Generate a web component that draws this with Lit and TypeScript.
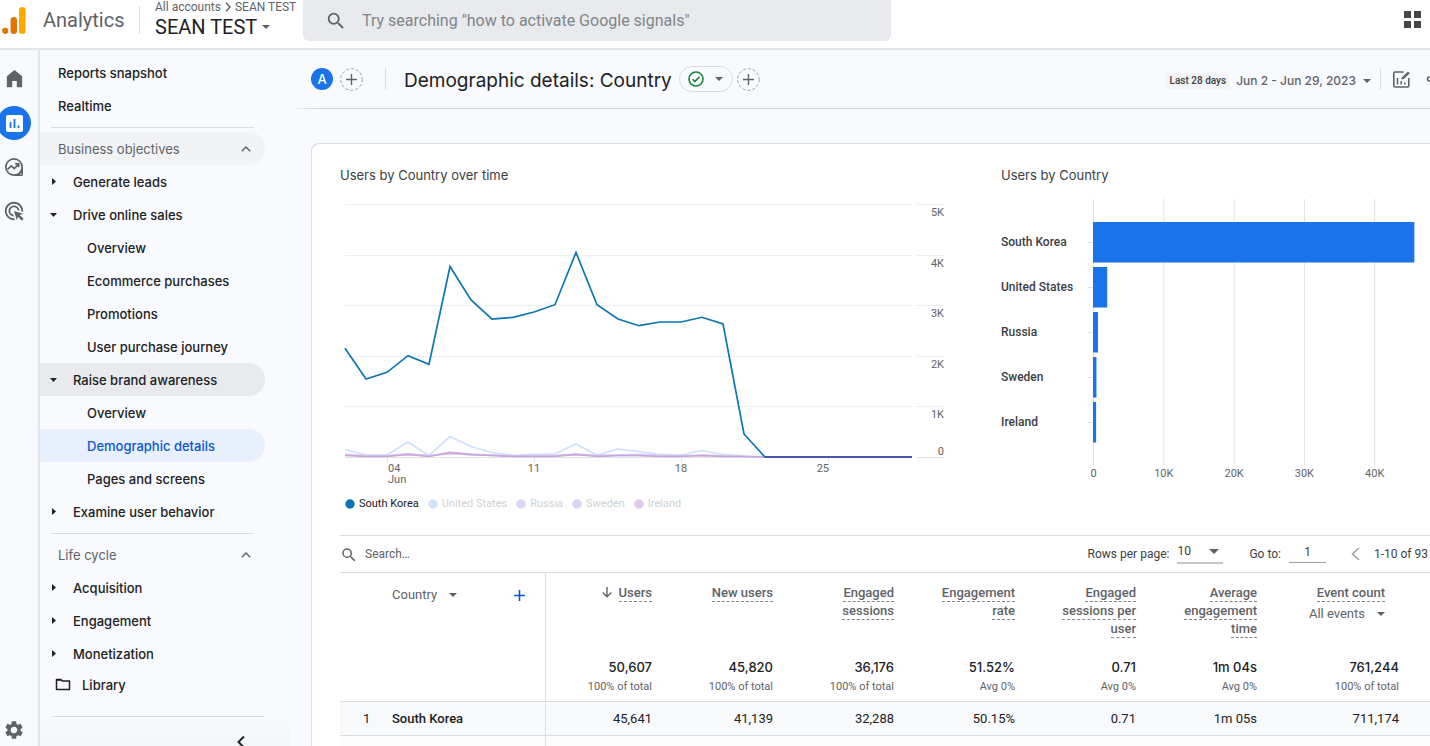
import { LitElement, html, svg, css } from "lit";
import { customElement } from "lit/decorators.js";
import { classMap } from "lit/directives/class-map.js";

type NavKind = "top" | "group" | "closed" | "open" | "leaf" | "rule" | "library";
interface NavItem {
  kind: NavKind;
  label?: string;
  tone?: "hover" | "parent" | "active";
}

const NAV: NavItem[] = [
  { kind: "top", label: "Reports snapshot" },
  { kind: "top", label: "Realtime" },
  { kind: "rule" },
  { kind: "group", label: "Business objectives", tone: "hover" },
  { kind: "closed", label: "Generate leads" },
  { kind: "open", label: "Drive online sales" },
  { kind: "leaf", label: "Overview" },
  { kind: "leaf", label: "Ecommerce purchases" },
  { kind: "leaf", label: "Promotions" },
  { kind: "leaf", label: "User purchase journey" },
  { kind: "open", label: "Raise brand awareness", tone: "parent" },
  { kind: "leaf", label: "Overview" },
  { kind: "leaf", label: "Demographic details", tone: "active" },
  { kind: "leaf", label: "Pages and screens" },
  { kind: "closed", label: "Examine user behavior" },
  { kind: "rule" },
  { kind: "group", label: "Life cycle" },
  { kind: "closed", label: "Acquisition" },
  { kind: "closed", label: "Engagement" },
  { kind: "closed", label: "Monetization" },
  { kind: "library", label: "Library" },
];

interface Series {
  name: string;
  color: string;
  faded: boolean;
  values: number[];
}

const ZEROS = [0, 0, 0, 0, 0, 0, 0, 0];
const SERIES: Series[] = [
  {
    name: "United States", color: "#cfe0fb", faded: true,
    values: [148, 40, 40, 296, 30, 405, 207, 89, 30, 40, 59, 257, 40, 158, 109, 50, 40, 128, 50, 20, ...ZEROS],
  },
  {
    name: "Russia", color: "#dcd3fb", faded: true,
    values: [50, 30, 30, 60, 30, 60, 50, 40, 30, 50, 40, 50, 40, 40, 50, 40, 30, 40, 30, 10, ...ZEROS],
  },
  {
    name: "Sweden", color: "#d0c0ee", faded: true,
    values: [40, 20, 20, 50, 20, 80, 40, 30, 20, 20, 20, 50, 20, 30, 30, 20, 20, 30, 20, 10, ...ZEROS],
  },
  {
    name: "Ireland", color: "#cba6dc", faded: true,
    values: [30, 10, 10, 50, 10, 90, 50, 30, 10, 10, 10, 50, 10, 30, 30, 10, 10, 30, 10, 10, ...ZEROS],
  },
  {
    name: "South Korea", color: "#0b76b2", faded: false,
    values: [2148, 1542, 1674, 2002, 1832, 3765, 3103, 2727, 2761, 2866, 3010, 4042, 3010, 2727, 2595, 2668, 2668, 2761, 2628, 455, ...ZEROS],
  },
];

const LEGEND = [
  { name: "South Korea", color: "#0b76b2", faded: false },
  { name: "United States", color: "#cfe3fc", faded: true },
  { name: "Russia", color: "#dcd6fb", faded: true },
  { name: "Sweden", color: "#dcd0f3", faded: true },
  { name: "Ireland", color: "#e2cbe8", faded: true },
];

const BARS = [
  { name: "South Korea", users: 45641 },
  { name: "United States", users: 1950 },
  { name: "Russia", users: 640 },
  { name: "Sweden", users: 420 },
  { name: "Ireland", users: 370 },
];

const METRICS = [
  { lines: ["Users"], total: "50,607", note: "100% of total", value: "45,641", sorted: true },
  { lines: ["New users"], total: "45,820", note: "100% of total", value: "41,139" },
  { lines: ["Engaged", "sessions"], total: "36,176", note: "100% of total", value: "32,288" },
  { lines: ["Engagement", "rate"], total: "51.52%", note: "Avg 0%", value: "50.15%" },
  { lines: ["Engaged", "sessions per", "user"], total: "0.71", note: "Avg 0%", value: "0.71" },
  { lines: ["Average", "engagement", "time"], total: "1m 04s", note: "Avg 0%", value: "1m 05s" },
  { lines: ["Event count"], total: "761,244", note: "100% of total", value: "711,174", events: true },
];

const caret = html`<svg class="caret" viewBox="0 0 8 4" width="8" height="4" aria-hidden="true"><path d="M0 0h8L4 4z" fill="currentColor"/></svg>`;
const magnifier = (size: number) => html`<svg viewBox="0 0 24 24" width=${size} height=${size} aria-hidden="true"><path fill="currentColor" d="M15.5 14h-.79l-.28-.27A6.47 6.47 0 0 0 16 9.5 6.5 6.5 0 1 0 9.5 16c1.61 0 3.09-.59 4.23-1.57l.27.28v.79l5 4.99L20.49 19l-4.99-5zm-6 0a4.5 4.5 0 1 1 0-9 4.5 4.5 0 0 1 0 9z"/></svg>`;

const base = css`
  * { box-sizing: border-box; }
  svg { display: block; flex: none; }
  button, input, select { font: inherit; color: inherit; background: none; border: 0; padding: 0; margin: 0; outline: 0; }
  button { display: inline-flex; align-items: center; justify-content: center; cursor: pointer; }
  a { color: inherit; text-decoration: none; }
`;

@customElement("ga-header")
class GaHeader extends LitElement {
  static styles = [base, css`
    :host { display: flex; height: 50px; background: #fff; border-bottom: 2px solid #e4e6e8; font-family: Roboto, sans-serif; }
    .brand { display: flex; align-items: center; gap: 17px; width: 139px; height: 40px; padding-left: 2px; color: #5f6368; font-size: 20px; line-height: 24px; }
    .account { display: flex; flex-direction: column; width: 164px; padding-left: 15px; border-left: 1px solid #dadce0; height: 28px; margin-top: 6px; }
    .crumbs { display: flex; align-items: center; gap: 4px; height: 14px; margin-top: -6px; font-size: 12px; line-height: 14px; color: #5f6368; white-space: nowrap; }
    .property { justify-content: flex-start; gap: 5px; font-size: 20px; line-height: 26px; color: #202124; white-space: nowrap; }
    .property .caret { color: #5f6368; }
    .search { display: flex; align-items: center; flex: 0 1 588px; height: 41px; padding: 0 22px; gap: 15px; background: #e8eaed; border-radius: 0 0 6px 6px; color: #5f6368; }
    .search input { flex: 1; min-width: 0; font: 16px/20px Roboto, sans-serif; }
    .search input::placeholder { color: #80868b; opacity: 1; }
    .apps { margin: 0 9px 9px auto; color: #444746; }
  `];
  render() {
    return html`
      <div class="brand">
        <svg viewBox="0 0 24 27" width="24" height="27" aria-hidden="true">
          <circle cx="3.2" cy="23.8" r="3.1" fill="#e37400"/>
          <rect x="8.6" y="10" width="6.4" height="17" rx="3.2" fill="#e37400"/>
          <rect x="17" y="0" width="6.6" height="27" rx="3.3" fill="#f9ab00"/>
        </svg>
        <span>Analytics</span>
      </div>
      <div class="account">
        <div class="crumbs">
          <span>All accounts</span>
          <svg viewBox="0 0 6 10" width="6" height="10" aria-hidden="true"><path d="M1 .8 5 5 1 9.2" fill="none" stroke="currentColor" stroke-width="1.4"/></svg>
          <span>SEAN TEST</span>
        </div>
        <button class="property">SEAN TEST ${caret}</button>
      </div>
      <label class="search">
        ${magnifier(22)}
        <input type="search" aria-label="Search" placeholder='Try searching "how to activate Google signals"' />
      </label>
      <button class="apps" aria-label="Apps">
        <svg viewBox="0 0 17 17" width="17" height="17" aria-hidden="true"><path fill="currentColor" d="M0 0h7v7H0zM10 0h7v7h-7zM0 10h7v7H0zM10 10h7v7h-7z"/></svg>
      </button>`;
  }
}

@customElement("ga-rail")
class GaRail extends LitElement {
  static styles = [base, css`
    :host { display: flex; flex-direction: column; flex: 0 0 40px; padding: 12px 10px 5px 0; border-right: 2px solid #e3e5e8; color: #5f6368; }
    button { width: 28px; height: 34px; margin-bottom: 10px; }
    .on { margin-left: -3px; margin-right: -3px; width: 34px; border-radius: 17px; background: #1a73e8; }
    .gear { margin-top: auto; margin-bottom: 0; height: 22px; }
  `];
  render() {
    return html`
      <button aria-label="Home"><svg viewBox="0 0 24 24" width="23" height="23"><path fill="currentColor" d="M4 20V8.6L12 2l8 6.6V20h-5.6v-6.5H9.6V20z"/></svg></button>
      <button class="on" aria-label="Reports"><svg viewBox="0 0 17 17" width="17" height="17"><rect width="17" height="17" rx="2" fill="#fff"/><path d="M4.5 7v6M8.500 4v9M12.500 10.500V13" stroke="#1a73e8" stroke-width="1.800"/></svg></button>
      <button aria-label="Explore"><svg viewBox="0 0 20 20" width="20" height="20"><path fill="currentColor" d="M19 10a9 9 0 1 0-9 9h7.500a1.500 1.500 0 0 0 1.500-1.500z"/><circle cx="10" cy="10" r="7.300" fill="#f8fafd"/><circle cx="17" cy="17" r=".7" fill="#f8fafd"/><path d="M3.500 12.300 7.300 8.900l3 2.700 4-4.200M11.200 6.800h3.500v3.500" fill="none" stroke="currentColor" stroke-width="1.700"/></svg></button>
      <button aria-label="Advertising"><svg viewBox="0 0 24 24" width="22" height="22"><path fill="currentColor" d="M11.710 17.990A5.993 5.993 0 0 1 6 12c0-3.310 2.690-6 6-6 3.220 0 5.840 2.530 5.990 5.710l-2.100-.63a3.999 3.999 0 1 0-4.810 4.810l.63 2.100zM22 12c0 .3-.01.6-.04.9l-1.970-.59c.01-.1.01-.21.01-.31 0-4.420-3.580-8-8-8s-8 3.580-8 8 3.580 8 8 8c.1 0 .21 0 .31-.01l.59 1.970c-.3.03-.6.04-.9.04-5.520 0-10-4.480-10-10S6.480 2 12 2s10 4.480 10 10zm-3.770 4.260L22 15l-10-3 3 10 1.260-3.770 4.270 4.270 1.980-1.980-4.280-4.260z"/></svg></button>
      <button class="gear" aria-label="Admin"><svg viewBox="0 0 24 24" width="22" height="22"><path fill="currentColor" d="M19.140 12.940c.04-.3.06-.61.06-.94 0-.32-.02-.64-.07-.94l2.030-1.580a.49.49 0 0 0 .12-.61l-1.920-3.320a.488.488 0 0 0-.59-.22l-2.390.96c-.5-.38-1.030-.7-1.620-.94l-.36-2.540a.484.484 0 0 0-.48-.41h-3.840c-.24 0-.43.17-.47.41l-.36 2.540c-.59.24-1.130.57-1.620.94l-2.390-.96c-.22-.08-.47 0-.59.22L2.740 8.870c-.12.21-.08.47.12.61l2.030 1.580c-.05.3-.09.63-.09.94s.02.64.07.94l-2.030 1.580a.49.49 0 0 0-.12.61l1.920 3.320c.12.22.37.29.59.22l2.390-.96c.5.38 1.030.7 1.620.94l.36 2.540c.05.24.24.41.48.41h3.840c.24 0 .44-.17.47-.41l.36-2.540c.59-.24 1.130-.56 1.620-.94l2.390.96c.22.08.47 0 .59-.22l1.920-3.320c.12-.22.07-.47-.12-.61l-2.010-1.580zM12 15.600A3.610 3.610 0 0 1 8.400 12c0-1.980 1.620-3.600 3.600-3.600s3.600 1.620 3.600 3.600-1.620 3.600-3.600 3.600z"/></svg></button>`;
  }
}

@customElement("ga-nav")
class GaNav extends LitElement {
  static styles = [base, css`
    :host { display: block; flex: 0 0 250px; padding-top: 6px; overflow: hidden; color: #202124; font: 500 13px/18px "Inter", sans-serif; background: linear-gradient(#f8fafd calc(100% - 40px), #f5f6f8); }
    .row { display: flex; align-items: center; width: 225px; height: 33px; border-radius: 0 17px 17px 0; white-space: nowrap; }
    .top { padding-left: 18px; }
    .group { padding: 0 14px 0 18px; justify-content: space-between; color: #5f6368; font-weight: 400; }
    .branch { gap: 15px; padding-left: 9px; }
    .mark { display: flex; justify-content: center; width: 9px; }
    .leaf { padding-left: 47px; }
    .library { gap: 11px; padding-left: 15px; height: 29px; }
    .hover { background: #f1f3f4; }
    .parent { background: #e8eaed; }
    .active { background: #e8f0fe; color: #0b57d0; }
    .rule { height: 1px; width: 203px; margin: 5px 0 4px 11px; border: 0; background: #dadce0; }
    .end { height: 1px; width: 212px; margin: 17px 0 18px 12px; border: 0; background: #dadce0; }
    .fold { margin-left: 196px; width: 10px; height: 14px; }
  `];
  private row(item: NavItem) {
    if (item.kind === "rule") return html`<hr class="rule" />`;
    const branch = item.kind === "open" || item.kind === "closed";
    const cls = { row: true, branch, [item.kind]: !branch, [item.tone ?? "plain"]: true };
    return html`<a href="#" class=${classMap(cls)}>
      ${item.kind === "closed" ? html`<span class="mark"><svg viewBox="0 0 4 7" width="4" height="7"><path d="M0 0v7l4-3.500z" fill="currentColor"/></svg></span>` : ""}
      ${item.kind === "open" ? html`<span class="mark"><svg viewBox="0 0 7 4" width="7" height="4"><path d="M0 0h7L3.500 4z" fill="currentColor"/></svg></span>` : ""}
      ${item.kind === "library" ? html`<svg viewBox="0 0 16 13" width="16" height="13"><path d="M1.500 1.500h4.300l1.500 1.500h7.200v8.500h-13z" fill="none" stroke="currentColor" stroke-width="1.500" stroke-linejoin="round"/><path d="M1.500 1.200h4.500l1.500 1.500h-6z" fill="currentColor"/></svg>` : ""}
      <span>${item.label}</span>
      ${item.kind === "group" ? html`<svg viewBox="0 0 10 6" width="10" height="6"><path d="M.8 5.300 5 1.100l4.200 4.200" fill="none" stroke="currentColor" stroke-width="1.400"/></svg>` : ""}
    </a>`;
  }
  render() {
    return html`
      <nav aria-label="Reports">${NAV.map((i) => this.row(i))}</nav>
      <hr class="end" />
      <button class="fold" aria-label="Collapse"><svg viewBox="0 0 10 14" width="10" height="14"><path d="M8 1.500 2.500 7 8 12.500" fill="none" stroke="currentColor" stroke-width="2"/></svg></button>`;
  }
}

@customElement("ga-toolbar")
class GaToolbar extends LitElement {
  static styles = [base, css`
    :host { display: flex; align-items: center; flex: 0 0 59px; padding-left: 21px; overflow: hidden; border-bottom: 1px solid; border-image: linear-gradient(90deg, transparent, #cfd1d4 30px) 1; color: #5f6368; font-family: Roboto, sans-serif; white-space: nowrap; }
    .avatar { width: 22px; height: 22px; border-radius: 11px; background: #1a73e8; color: #fff; font: 500 13px/22px "Inter", sans-serif; text-align: center; }
    .add { margin-left: 7px; }
    .bar { width: 1px; height: 22px; background: #dadce0; }
    .bar.one { margin: 0 18px 0 22px; }
    h1 { margin: 0; padding-top: 3px; color: #202124; font: 400 19px/26px "Inter", sans-serif; }
    .status { gap: 11px; width: 54px; height: 26px; margin-left: 7px; border: 1px solid #dadce0; border-radius: 13px; }
    .status + .add { margin-left: 4px; }
    .period { display: flex; align-items: center; gap: 6px; margin-left: auto; padding-top: 3px; }
    .chip { padding: 0 4px; background: #f1f3f4; color: #3c4043; font-weight: 500; font-size: 10px; line-height: 16px; }
    .date { gap: 7px; font: 500 12px/20px "Inter", sans-serif; }
    .bar.two { margin: 0 11px 0 9px; }
    .share { width: 7px; margin-left: 12px; overflow: hidden; justify-content: flex-start; }
  `];
  private plus() {
    return html`<button class="add" aria-label="Add comparison"><svg viewBox="0 0 23 23" width="23" height="23"><circle cx="11.500" cy="11.500" r="10.800" fill="none" stroke="#9aa0a6" stroke-dasharray="3 2"/><path d="M11.500 6v11M6 11.500h11" stroke="#5f6368" stroke-width="1.400"/></svg></button>`;
  }
  render() {
    return html`
      <span class="avatar">A</span>
      ${this.plus()}
      <span class="bar one"></span>
      <h1>Demographic details: Country</h1>
      <button class="status" aria-label="Report status">
        <svg viewBox="0 0 16 16" width="16" height="16"><circle cx="8" cy="8" r="7" fill="none" stroke="#188038" stroke-width="1.600"/><path d="m4.600 8.200 2.300 2.300 4.600-4.800" fill="none" stroke="#188038" stroke-width="1.600"/></svg>
        ${caret}
      </button>
      ${this.plus()}
      <div class="period">
        <span class="chip">Last 28 days</span>
        <button class="date">Jun 2 - Jun 29, 2023 ${caret}</button>
      </div>
      <span class="bar two"></span>
      <button aria-label="Customize report"><svg viewBox="0 0 19 19" width="19" height="19"><path d="M11.500 2H3a1.200 1.200 0 0 0-1.200 1.200v12.600A1.200 1.200 0 0 0 3 17h12.600a1.200 1.200 0 0 0 1.200-1.200V8" fill="none" stroke="currentColor" stroke-width="1.600"/><path d="M5.500 8v6.500M9.200 11v3.500M12.800 12.500v2" stroke="currentColor" stroke-width="1.500"/><path d="m9.500 9.500.5-2.300L16 1.500l1.800 1.700-6 5.800z" fill="currentColor"/></svg></button>
      <button class="share" aria-label="Share"><svg viewBox="0 0 18 18" width="18" height="18"><circle cx="6.500" cy="9" r="2" fill="none" stroke="currentColor" stroke-width="1.600"/><path d="m8 8 6-4M8 10l6 4" stroke="currentColor" stroke-width="1.500"/></svg></button>`;
  }
}

@customElement("ga-charts")
class GaCharts extends LitElement {
  static styles = [base, css`
    :host { display: grid; grid-template-columns: minmax(0, 605fr) minmax(0, 429fr); column-gap: 56px; color: #3c4043; font: 12px/16px Roboto, sans-serif; }
    h2 { margin: 0 0 11px; font: 400 13px/18px "Inter", sans-serif; color: #3c4043; }
    .plot { width: 100%; height: auto; overflow: hidden; }
    .tick { font-size: 11px; fill: #5f6368; }
    .place { font-size: 12px; font-weight: 500; fill: #3c4043; }
    .end { text-anchor: end; }
    .mid { text-anchor: middle; }
    ul { display: flex; gap: 9px; margin: 5px 0 0; padding: 0 0 0 5px; list-style: none; font-size: 11px; color: #202124; }
    li { display: flex; align-items: center; gap: 4px; }
    .faded { color: #cfd1d4; }
  `];
  private lineChart() {
    const x = (i: number) => 5 + i * 21;
    const y = (v: number) => 262 - (v / 5000) * 253;
    return html`<svg class="plot" viewBox="0 0 605 296" role="img" aria-label="Users by Country over time">
      ${[0, 1, 2, 3, 4, 5].map((k) => {
        const gy = Math.round(y(k * 1000)) + 0.5;
        return svg`<path d="M5 ${gy}H572M576 ${gy}H604" stroke=${k ? "#eeeff1" : "#e2e4e6"}/>
          <text class="tick end" x="604" y=${k ? gy + 11 : gy - 3}>${k ? k + "K" : "0"}</text>`;
      })}
      ${[2, 9, 16, 23].map((i) => svg`<path d="M${x(i) + 0.5} 262v6" stroke="#e2e4e6"/>`)}
      ${SERIES.map((s) => svg`<polyline fill="none" stroke=${s.color} stroke-width="1.700" points=${s.values.map((v, i) => `${x(i)},${y(v)}`).join(" ")}/>`)}
      <path d="M${x(20)} 262H${x(27)}" stroke="#4a57ad" stroke-width="2"/>
      <text class="tick" x="48" y="277">04</text>
      <text class="tick" x="48" y="288">Jun</text>
      <text class="tick mid" x="194" y="277">11</text>
      <text class="tick mid" x="341" y="277">18</text>
      <text class="tick end" x="489" y="277">25</text>
    </svg>`;
  }
  private barChart() {
    const x = (v: number) => 92.5 + (v / 10000) * 70.3;
    return html`<svg class="plot" viewBox="0 0 429 296" role="img" aria-label="Users by Country">
      ${[0, 1, 2, 3, 4].map((k) => svg`
        <path d="M${x(k * 10000)} 4V270" stroke="#dfe1e5"/>
        <text class="tick mid" x=${x(k * 10000)} y="282">${k ? k * 10 + "K" : "0"}</text>`)}
      ${BARS.map((b, i) => svg`
        <path d="M87 ${47.5 + i * 45}h5" stroke="#dfe1e5"/>
        <rect x="92" y=${27 + i * 45} width=${x(b.users) - 92} height="40.500" fill="#1a73e8"/>
        <text class="place" x="0" y=${51 + i * 45}>${b.name}</text>`)}
    </svg>`;
  }
  render() {
    return html`
      <section>
        <h2>Users by Country over time</h2>
        ${this.lineChart()}
        <ul>${LEGEND.map((l) => html`<li class=${classMap({ faded: l.faded })}>
          <svg viewBox="0 0 10 10" width="10" height="10"><circle cx="5" cy="5" r="4.700" fill=${l.color}/></svg>${l.name}</li>`)}</ul>
      </section>
      <section>
        <h2>Users by Country</h2>
        ${this.barChart()}
      </section>`;
  }
}

@customElement("ga-table")
class GaTable extends LitElement {
  static styles = [base, css`
    :host { display: block; border-top: 1px solid #dadce0; color: #3c4043; font: 12px/16px Roboto, sans-serif; }
    .controls { display: flex; align-items: center; height: 36px; white-space: nowrap; }
    .find { display: flex; align-items: center; gap: 7px; flex: 1; color: #5f6368; }
    .find input { flex: 1; min-width: 0; }
    .find input::placeholder { color: #5f6368; opacity: 1; }
    .find svg { margin-top: 2px; }
    .rows { display: flex; align-items: center; gap: 8px; }
    .pick { display: flex; align-items: center; width: 46px; height: 23px; margin-bottom: 4px; border-bottom: 2px solid #c4c7c5; }
    .pick select { appearance: none; flex: 1; width: 100%; }
    .pick svg { margin-right: 4px; color: #5f6368; }
    .goto { display: flex; align-items: center; gap: 8px; margin-left: 26px; }
    .goto input { width: 37px; height: 21px; margin-bottom: 4px; text-align: center; border-bottom: 1px solid #9aa0a6; }
    .prev { margin: 0 14px 0 25px; color: #9aa0a6; }
    .range { width: 56px; }
    table { width: 100%; table-layout: fixed; border-collapse: collapse; border-top: 1px solid #dadce0; }
    .first { width: 205px; }
    .lead { width: 117px; }
    .metric { width: 121px; }
    .event { width: 142px; }
    th, td { padding: 0 10px 0 0; text-align: right; vertical-align: top; font-weight: 400; }
    th.dim, td.dim { border-right: 1px solid #dadce0; text-align: left; }
    .names th { height: 86px; padding-top: 11px; color: #5f6368; font: 500 13px/18px Roboto, sans-serif; white-space: nowrap; }
    .names .dim { padding: 11px 20px 0 52px; font-weight: 400; }
    .dimhead { display: flex; align-items: center; height: 22px; }
    .dimhead .caret { margin-left: 12px; }
    .plus { margin-left: auto; color: #0b57d0; }
    .term { display: inline-block; height: 18px; border-bottom: 1px dashed #80868b; }
    .sort { display: inline-block; vertical-align: middle; margin: 0 7px 2px 0; }
    .names .ev { padding-right: 24px; }
    .filter { display: flex; justify-content: flex-end; gap: 12px; width: 100%; height: 20px; font-weight: 400; margin-top: 2px; }
    .totals td { height: 43px; color: #5f6368; font-size: 11px; line-height: 16px; }
    .totals b { display: block; margin-bottom: 4px; color: #202124; font: 500 13px/16px "Inter", sans-serif; }
    tbody tr { border-top: 1px solid #dadce0; background: #f8f9fa; }
    tbody td { height: 33px; font-size: 13px; line-height: 33px; color: #202124; }
    tbody .dim { font-weight: 500; padding-left: 23px; }
    .index { display: inline-block; width: 29px; font-weight: 400; }
    tbody .next { background: #fcfcfd; }
  `];
  render() {
    return html`
      <div class="controls">
        <label class="find">${magnifier(18)}<input type="search" aria-label="Search rows" placeholder="Search…" /></label>
        <div class="rows"><label for="rows">Rows per page:</label>
          <span class="pick"><select id="rows"><option>10</option><option>25</option></select>
            <svg viewBox="0 0 10 5" width="10" height="5"><path d="M0 0h10L5 5z" fill="currentColor"/></svg></span></div>
        <div class="goto"><label for="goto">Go to:</label><input id="goto" type="text" value="1" /></div>
        <button class="prev" aria-label="Previous page"><svg viewBox="0 0 9 14" width="9" height="14"><path d="M8 1 1.500 7 8 13" fill="none" stroke="currentColor" stroke-width="1.600"/></svg></button>
        <span class="range">1-10 of 93</span>
      </div>
      <table>
        <colgroup><col class="first" /><col class="lead" /><col class="metric" /><col class="metric" /><col class="metric" /><col class="metric" /><col class="metric" /><col class="event" /><col /></colgroup>
        <thead>
          <tr class="names">
            <th class="dim"><div class="dimhead">Country ${caret}
              <button class="plus" aria-label="Add dimension"><svg viewBox="0 0 11 11" width="11" height="11"><path d="M5.500 0v11M0 5.500h11" stroke="currentColor" stroke-width="1.600"/></svg></button></div></th>
            ${METRICS.map((m) => html`<th class=${classMap({ ev: !!m.events })}>
              ${m.sorted ? html`<svg class="sort" viewBox="0 0 10 11" width="10" height="11"><path d="M5 0v10M.8 5.600 5 9.800l4.200-4.200" fill="none" stroke="currentColor" stroke-width="1.400"/></svg>` : ""}${m.lines.map((l, i) => html`${i ? html`<br />` : ""}<span class="term">${l}</span>`)}
              ${m.events ? html`<button class="filter">All events ${caret}</button>` : ""}
            </th>`)}
            <th></th>
          </tr>
          <tr class="totals">
            <td class="dim"></td>
            ${METRICS.map((m) => html`<td><b>${m.total}</b>${m.note}</td>`)}
            <td></td>
          </tr>
        </thead>
        <tbody>
          <tr><td class="dim"><span class="index">1</span>South Korea</td>${METRICS.map((m) => html`<td>${m.value}</td>`)}<td></td></tr>
          <tr class="next"><td class="dim"></td><td colspan="8"></td></tr>
        </tbody>
      </table>`;
  }
}

@customElement("app-root")
class AppRoot extends LitElement {
  static styles = [base, css`
    :host { display: flex; flex-direction: column; height: 100vh; overflow: hidden; background: #f8fafd; }
    .body { display: flex; flex: 1; min-height: 0; }
    main { display: flex; flex-direction: column; flex: 1; min-width: 0; }
    .scroll { flex: 1; min-height: 0; overflow: hidden; padding: 34px 0 0 21px; }
    .card { min-height: 100%; padding: 22px 0 0 28px; background: #fff; border: 1px solid #dadce0; border-right: 0; border-bottom: 0; border-radius: 8px 0 0 0; }
    .table { margin-top: 23px; }
  `];
  render() {
    return html`
      <ga-header></ga-header>
      <div class="body">
        <ga-rail></ga-rail>
        <ga-nav></ga-nav>
        <main>
          <ga-toolbar></ga-toolbar>
          <div class="scroll"><div class="card">
            <ga-charts></ga-charts>
            <ga-table class="table"></ga-table>
          </div></div>
        </main>
      </div>`;
  }
}
